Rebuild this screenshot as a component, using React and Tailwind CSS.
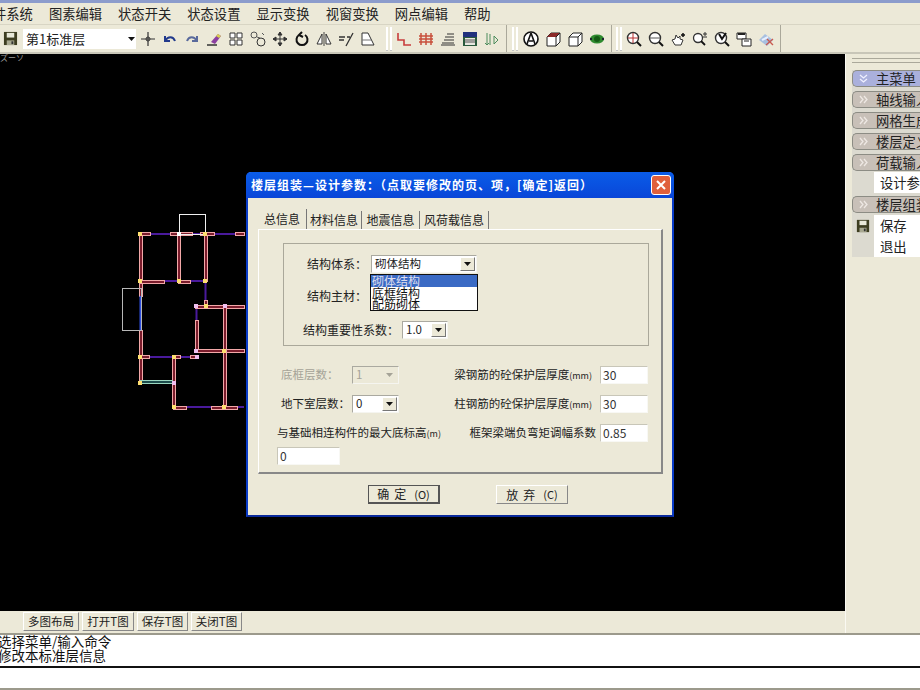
import React from 'react';

// toolbar icons, 16x16 drawings
const icons = {
  save: <><path d="M1 1h14v14H1z" fill="#3d3d20" /><path d="M4 2h8v5H4z" fill="#e8e8d8" /><path d="M4 10h8v5H4z" fill="#a8a890" /><path d="M9 11h2v3H9z" fill="#333" /></>,
  snap: <><path d="M8 1v14M1 8h14" stroke="#333" strokeWidth="1.2" fill="none" /><circle cx="8" cy="8" r="2" fill="none" stroke="#333" /></>,
  undo: <path d="M3 5v5h5M3 10c3-5 8-5 10 0" stroke="#223a8c" strokeWidth="2" fill="none" />,
  redo: <path d="M13 5v5H8M13 10C10 5 5 5 3 10" stroke="#5a6a9c" strokeWidth="2" fill="none" />,
  erase: <><path d="M5 11l7-8 3 2-6 8z" fill="#8a3fa0" /><path d="M10 5l2-2 3 2-2 2z" fill="#d8d050" /><path d="M1 14h10" stroke="#333" strokeWidth="1.5" /></>,
  grid: <path d="M2 2h5v5H2zM9 2h5v5H9zM2 9h5v5H2zM9 9h5v5H9z" fill="#fff" stroke="#333" />,
  copy: <><circle cx="4" cy="4" r="3" fill="none" stroke="#555" /><circle cx="11" cy="11" r="4" fill="none" stroke="#333" /><path d="M7 6l3 1M12 2l2 2" stroke="#555" /></>,
  move: <path d="M8 1v14M1 8h14M8 1L6 4h4zM8 15l-2-3h4zM1 8l3-2v4zM15 8l-3-2v4z" stroke="#333" fill="#333" />,
  rotate: <path d="M5 4a5.5 5.5 0 1 0 6 0M8 1l-3 3 4 2" stroke="#111" strokeWidth="2" fill="none" />,
  mirror: <><path d="M8 1v14" stroke="#444" /><path d="M6 3v10H1zM10 3v10h5z" fill="#fff" stroke="#333" /></>,
  trim: <path d="M1 6h6M1 9h5M15 2L8 15M9 6h3" stroke="#333" strokeWidth="1.3" fill="none" />,
  corner: <><path d="M2 2h6l6 12H2z" fill="#fff" stroke="#333" /><path d="M2 9h9" stroke="#777" /></>,
  step: <path d="M2 2v7h6v5h7" stroke="#c83c3c" strokeWidth="1.6" fill="none" />,
  wall: <path d="M3 2v12M8 2v12M13 2v12M1 5h14M1 8h14M1 11h14" stroke="#c8503c" strokeWidth="1.5" />,
  lines: <path d="M7 3h7M5 6h9M4 9h10M2 12h12M1 14h14" stroke="#333" />,
  building: <><path d="M1 1h14v14H1z" fill="#2a5a3c" /><path d="M1 1h14v5H1z" fill="#20307c" /><path d="M3 7h10v7H3z" fill="#e8e8e0" /><path d="M3 9h10M3 11h10" stroke="#555" /></>,
  arrows: <path d="M3 2v12M6 3v11M10 5l4 4-4 4zM1 12l2 2 2-2" stroke="#4c8c5c" fill="none" />,
  pen: <><circle cx="8" cy="8" r="7" fill="#fff" stroke="#111" strokeWidth="1.6" /><path d="M8 2L4 13M8 2l4 11M6 10h4" stroke="#111" strokeWidth="1.6" fill="none" /></>,
  box1: <><path d="M2 6l4-4h9v9l-4 4H2z" fill="#fff" stroke="#222" /><path d="M2 6l4-4h9l-4 4z" fill="#8c2a2a" /><path d="M11 6v9M11 6l4-4" stroke="#222" /></>,
  box2: <><path d="M2 6l4-4h9v9l-4 4H2z" fill="#fff" stroke="#222" /><path d="M2 6h9v9M11 6l4-4" stroke="#222" fill="none" /></>,
  globe: <><ellipse cx="8" cy="8" rx="7" ry="4.5" fill="#2f8a2f" /><circle cx="8" cy="8" r="3" fill="#145c14" /><path d="M1 8h2M13 8h2" stroke="#223" strokeWidth="2" /></>,
  zoom1: <><circle cx="7" cy="7" r="5.5" fill="#fff" stroke="#333" strokeWidth="1.4" /><path d="M7 2v10M2 7h10" stroke="#b83030" /><path d="M11 11l4 4" stroke="#111" strokeWidth="2" /></>,
  zoom2: <><circle cx="7" cy="7" r="5.5" fill="#fff" stroke="#333" strokeWidth="1.4" /><path d="M2 7h10" stroke="#555" /><path d="M11 11l4 4" stroke="#111" strokeWidth="2" /></>,
  hand: <><path d="M2 9l3 5h6l2-5-3-1V5L8 7 6 4 5 8z" fill="#fff" stroke="#333" /><path d="M11 4h4M13 2v4" stroke="#111" strokeWidth="1.5" /></>,
  zoom3: <><circle cx="6" cy="7" r="4.5" fill="#fff" stroke="#333" strokeWidth="1.3" /><path d="M9 10l4 4" stroke="#111" strokeWidth="1.8" /><path d="M11 3h4M13 1v4M11 6h4" stroke="#333" /></>,
  zoom4: <><circle cx="7" cy="7" r="5.5" fill="#fff" stroke="#333" strokeWidth="1.4" /><path d="M5 3l3 5 4-6" stroke="#111" strokeWidth="2" fill="none" /><path d="M11 11l4 4" stroke="#111" strokeWidth="2" /></>,
  pages: <><path d="M1 2h9v6H1z" fill="#fff" stroke="#222" /><path d="M6 8h9v7H6z" fill="#fff" stroke="#222" /><path d="M2 3h7" stroke="#222" strokeWidth="2" /><path d="M8 10h5" stroke="#222" /></>,
  clean: <><path d="M1 9l6-6 8 6-6 6z" fill="#a8c0e0" /><path d="M4 9l6-3" stroke="#e8f0ff" strokeWidth="2" /><path d="M8 14l7-6M9 8l6 6" stroke="#c85a50" strokeWidth="1.4" /></>,
};

const Ico = ({ name, w = 22 }) => (
  <div className="flex shrink-0 justify-center" style={{ width: w }}>
    <svg width="16" height="16" viewBox="0 0 16 16">{icons[name]}</svg>
  </div>
);

const Grip = ({ className }) => (
  <div className={`flex h-[24px] w-[6px] shrink-0 gap-[2px] ${className}`}>
    <div className="w-[2px] border-x border-x-[#fff] border-b border-b-[#888] bg-[#d8d5c4]" />
    <div className="w-[2px] border-x border-x-[#fff] border-b border-b-[#888] bg-[#d8d5c4]" />
  </div>
);

const Arrow = ({ color = '#111' }) => (
  <svg width="7" height="4" viewBox="0 0 7 4"><path d="M0 0h7L3.5 4z" fill={color} /></svg>
);

// a win32 combo box
const Combo = ({ value, width, disabled }) => (
  <div
    className={`flex h-[18px] shrink-0 items-center justify-between border border-[#aaa9a0] border-r-[#f5f5f0] border-b-[#f5f5f0] pl-[3px] pr-[1px] text-[11.5px] ${disabled ? 'bg-[#ece9d8] text-[#a5a397]' : 'bg-white text-[#222]'}`}
    style={{ width }}
  >
    <span>{value}</span>
    <div className={`flex h-[14px] w-[15px] items-center justify-center ${disabled ? '' : 'border border-[#fff] border-r-[#777] border-b-[#777] bg-[#ece9d8]'}`}>
      <Arrow color={disabled ? '#a5a397' : '#111'} />
    </div>
  </div>
);

const Input = ({ value, width = 48 }) => (
  <div className="flex h-[18px] shrink-0 items-center border border-[#c8c6b8] border-r-[#f8f8f4] border-b-[#f8f8f4] bg-white pl-[2px] text-[12px] text-[#333]" style={{ width }}>
    {value}
  </div>
);

const Wall = ({ x, y, w, h }) => (
  <rect x={x + 0.5} y={y + 0.5} width={w} height={h} fill="#7a1c2c" stroke="#f2a8a8" strokeWidth="1" />
);

const FloorPlan = () => {
  const walls = [
    [139, 234, 3, 62], [139, 330, 3, 52], [177, 234, 3, 47], [204, 234, 3, 47],
    [140, 232, 10, 3], [170, 232, 22, 3], [200, 232, 14, 3], [235, 232, 9, 3],
    [140, 280, 24, 3], [178, 280, 12, 3], [204, 300, 3, 8],
    [195, 305, 49, 3], [195, 320, 3, 32], [196, 349, 48, 3], [223, 306, 3, 101],
    [140, 355, 9, 3], [173, 355, 7, 3], [190, 355, 8, 3], [172, 357, 3, 50],
    [173, 406, 13, 3], [211, 406, 26, 3],
  ];
  const purple = [
    'M150 234H170', 'M192 234H200', 'M214 234H235', 'M164 281H178', 'M190 281H205', 'M205.5 281V300',
    'M196.5 306V320', 'M149 357H173', 'M180 357H190', 'M186 407H211', 'M237 407H244',
  ];
  const nodes = [
    [138, 232, '#ffe070'], [177, 232, '#fff'], [203, 232, '#ffe070'], [138, 279, '#ffe070'], [177, 279, '#ffe070'],
    [203, 279, '#ffe070'], [204, 304, '#ffe070'], [194, 304, '#f0c0f0'], [223, 304, '#f0c0f0'], [194, 349, '#f0c0f0'],
    [222, 349, '#ffe070'], [138, 355, '#ffe070'], [172, 355, '#ffe070'], [195, 355, '#f0c0f0'], [138, 381, '#ffe070'],
    [172, 381, '#f0c0f0'], [172, 405, '#ffe070'], [222, 405, '#ffe070'],
  ];
  return (
    <svg className="absolute left-0 top-0" width="845" height="557" viewBox="0 54 845 557">
      {purple.map((d) => <path key={d} d={d} stroke="#4a1a9c" strokeWidth="2" fill="none" />)}
      {walls.map(([x, y, w, h]) => <Wall key={`${x}-${y}`} x={x} y={y} w={w} h={h} />)}
      <path d="M140.5 296V330" stroke="#3050e0" strokeWidth="2" />
      <rect x="122.5" y="288.5" width="19" height="42" fill="none" stroke="#b8b8b8" />
      <rect x="179.5" y="214.5" width="26" height="20" fill="none" stroke="#f0f0f0" />
      <rect x="140.5" y="380.5" width="32" height="3" fill="#1c4c4c" stroke="#9cd8c0" />
      {nodes.map(([x, y, c]) => <rect key={`${x}-${y}`} x={x} y={y} width="4" height="4" fill={c} />)}
    </svg>
  );
};

const Pill = ({ label, active }) => (
  <div className={`flex h-[17px] items-center whitespace-nowrap rounded-l-[5px] border border-r-0 border-[#8c8c84] text-[13.3px] text-[#222] ${active ? 'bg-[#aab0dc]' : 'bg-[#c8c0b8]'}`}>
    <div className="flex w-[23px] shrink-0 justify-center pr-[2px]">
      {active ? (
        <svg width="9" height="9" viewBox="0 0 9 9"><path d="M1 1l3.5 3L8 1M1 5l3.5 3L8 5" stroke="#f0f0ff" strokeWidth="1.3" fill="none" /></svg>
      ) : (
        <svg width="9" height="9" viewBox="0 0 9 9"><path d="M1 1l3 3.5L1 8M5 1l3 3.5L5 8" stroke="#eee8e4" strokeWidth="1.3" fill="none" /></svg>
      )}
    </div>
    {label}
  </div>
);

const MenuRow = ({ label, save }) => (
  <div className="flex h-[21px] whitespace-nowrap text-[13.3px] text-[#222]">
    <div className="flex w-[22px] shrink-0 items-center justify-center bg-[#dcdad0]">
      {save && <svg width="14" height="14" viewBox="0 0 16 16">{icons.save}</svg>}
    </div>
    <div className="flex flex-1 items-center bg-white pl-[6px]">{label}</div>
  </div>
);

const TabBtn = ({ label, width }) => (
  <div className="flex h-[19px] items-center justify-center whitespace-nowrap border border-[#fff] border-r-[#888] border-b-[#888] bg-[#ece9d8] text-[11.5px] text-[#222]" style={{ width }}>
    {label}
  </div>
);

const App = () => {
  return (
    <div className="relative flex h-[690px] w-[920px] flex-col overflow-hidden bg-[#ece9d8] text-[13px] text-[#222] [font-family:'Noto_Sans_CJK_SC','Liberation_Sans',sans-serif]">
      <div className="h-[3px] shrink-0 bg-[#8c9ccc]" />

      {/* menu bar */}
      <div className="-ml-[7px] flex h-[22px] shrink-0 items-center gap-[16px] whitespace-nowrap border-b border-b-[#d8d5c4] text-[13.3px]">
        <span>件系统</span>
        <span>图素编辑</span>
        <span>状态开关</span>
        <span>状态设置</span>
        <span>显示变换</span>
        <span>视窗变换</span>
        <span>网点编辑</span>
        <span>帮助</span>
      </div>

      {/* toolbar */}
      <div className="flex h-[29px] shrink-0 items-center border-b-2 border-b-[#c8c6b8]">
        <div className="flex h-[27px] w-[781px] items-center border-r border-r-[#aaa89a] pl-[3px]">
          <svg width="15" height="15" viewBox="0 0 16 16" className="shrink-0">{icons.save}</svg>
          <div className="ml-[5px] flex h-[20px] w-[113px] shrink-0 items-center justify-between bg-white pl-[3px] pr-[1px] text-[13px]">
            <span>第1标准层</span>
            <Arrow />
          </div>
          <div className="ml-[1px] flex">
            {['snap', 'undo', 'redo', 'erase', 'grid', 'copy', 'move', 'rotate', 'mirror', 'trim', 'corner'].map((n) => <Ico key={n} name={n} />)}
          </div>
          <Grip className="ml-[7px] mr-[1px]" />
          <div className="flex">
            {['step', 'wall', 'lines', 'building', 'arrows'].map((n) => <Ico key={n} name={n} />)}
          </div>
          <div className="ml-[3px] h-[27px] border-l border-l-[#aaa89a]" />
          <Grip className="ml-[5px] mr-[2px]" />
          <div className="flex">
            {['pen', 'box1', 'box2', 'globe'].map((n) => <Ico key={n} name={n} />)}
          </div>
          <div className="ml-[3px] h-[27px] border-l border-l-[#aaa89a]" />
          <Grip className="ml-[4px] mr-[1px]" />
          <div className="flex">
            {['zoom1', 'zoom2', 'hand', 'zoom3', 'zoom4', 'pages', 'clean'].map((n) => <Ico key={n} name={n} />)}
          </div>
        </div>
      </div>

      {/* main area */}
      <div className="flex h-[579px] shrink-0">
        <div className="flex w-[845px] shrink-0 flex-col">
          <div className="relative h-[557px] shrink-0 bg-black">
            <span className="absolute left-0 top-[-1px] text-[8px] leading-[10px] text-[#999]">ズーソ</span>
            <FloorPlan />
          </div>
          <div className="flex h-[22px] items-start gap-[3px] pl-[23px] pt-[1px]">
            <TabBtn label="多图布局" width={56} />
            <TabBtn label="打开T图" width={52} />
            <TabBtn label="保存T图" width={51} />
            <TabBtn label="关闭T图" width={51} />
          </div>
        </div>
        <div className="flex-1 border-l border-l-[#faf9f2] pl-[6px] pt-[4px]">
          <div className="mb-[7px] h-[5px] border-y border-y-[#aaa89a]" />
          <div className="bg-[#dcdad0]">
            <div className="flex flex-col gap-[4px]">
              <Pill label="主菜单" active />
              <Pill label="轴线输入" />
              <Pill label="网格生成" />
              <Pill label="楼层定义" />
              <Pill label="荷载输入" />
            </div>
            <div className="mt-[1px]"><MenuRow label="设计参数" /></div>
            <div className="mt-[3px]"><Pill label="楼层组装" /></div>
            <div className="mt-[2px]">
              <MenuRow label="保存" save />
              <MenuRow label="退出" />
            </div>
          </div>
        </div>
      </div>

      {/* command area */}
      <div className="h-[2px] shrink-0 bg-[#9c9a8c]" />
      <div className="-ml-[2px] h-[33px] shrink-0 whitespace-nowrap border-b-2 border-b-[#111] bg-white text-[13.5px] leading-[14px] text-[#111]">
        <div className="-mt-[1px]">选择菜单/输入命令</div>
        <div>修改本标准层信息</div>
      </div>
      <div className="h-[20px] shrink-0 bg-white" />
      <div className="h-[2px] shrink-0 bg-[#9c9a8c]" />

      {/* dialog */}
      <div className="absolute left-[246px] top-[172px] h-[345px] w-[428px] rounded-t-[5px] border-2 border-t-0 border-[#0a3cc8] border-b-[#0a2a9c] bg-[#ece9d8] text-[12px]">
        <div className="-mx-[2px] flex h-[26px] items-center justify-between rounded-t-[5px] bg-gradient-to-b from-[#0a5ce8] to-[#0a46d8] pl-[5px] pr-[3px] text-[12px] font-bold whitespace-nowrap text-white">
          <span className="tracking-[1px]">楼层组装—设计参数：（点取要修改的页、项，[确定]返回）</span>
          <div className="flex h-[20px] w-[20px] items-center justify-center rounded-[3px] border border-white bg-[#e0603c]">
            <svg width="10" height="10" viewBox="0 0 10 10"><path d="M1 1l8 8M9 1L1 9" stroke="#fff" strokeWidth="2" /></svg>
          </div>
        </div>

        <div className="ml-[10px] mt-[11px] w-[405px]">
          <div className="flex h-[20px] items-end">
            <div className="flex h-[20px] w-[49px] items-start justify-center border-r border-r-[#777] pt-[1px]">总信息</div>
            <div className="flex h-[18px] w-[55px] items-center justify-center border-r border-r-[#777]">材料信息</div>
            <div className="flex h-[18px] w-[58px] items-center justify-center border-r border-r-[#777]">地震信息</div>
            <div className="flex h-[18px] w-[69px] items-center justify-center border-r border-r-[#777]">风荷载信息</div>
          </div>
          <div className="h-[245px] border border-t-[#fff] border-l-[#fff] border-r-2 border-r-[#888] border-b-2 border-b-[#888] pt-[13px]">
            <div className="relative ml-[24px] h-[103px] w-[366px] border border-[#aaa89a] pt-[11px]">
              <div className="flex h-[18px] items-center pl-[23px]">
                <span className="w-[64px]">结构体系：</span>
                <Combo value="砌体结构" width={106} />
              </div>
              <div className="mt-[14px] flex h-[18px] items-center pl-[23px]">
                <span className="w-[64px]">结构主材：</span>
              </div>
              <div className="mt-[16px] flex h-[18px] items-center pl-[19px]">
                <span className="w-[99px]">结构重要性系数：</span>
                <Combo value="1.0" width={46} />
              </div>
              {/* open dropdown list */}
              <div className="absolute left-[86px] top-[30px] w-[108px] border border-[#111] bg-white text-[12px] leading-[11.5px] text-[#111]">
                <div className="h-[12px] bg-[#3a6ac4] pl-[1px] text-[#dde]">砌体结构</div>
                <div className="h-[11px] pl-[1px]">底框结构</div>
                <div className="h-[12px] pl-[1px]">配筋砌体</div>
              </div>
            </div>

            <div className="mt-[20px] flex h-[18px] items-center justify-between pl-[22px] pr-[13px] text-[11.5px]">
              <div className="flex items-center text-[#a5a397]">
                <span className="w-[71px]">底框层数：</span>
                <Combo value="1" width={47} disabled />
              </div>
              <div className="flex items-center gap-[8px]">
                <span>梁钢筋的砼保护层厚度<span className="text-[9px]">(mm)</span></span>
                <Input value="30" />
              </div>
            </div>
            <div className="mt-[11px] flex h-[18px] items-center justify-between pl-[22px] pr-[13px] text-[11.5px]">
              <div className="flex items-center">
                <span className="w-[71px]">地下室层数：</span>
                <Combo value="0" width={47} />
              </div>
              <div className="flex items-center gap-[8px]">
                <span>柱钢筋的砼保护层厚度<span className="text-[9px]">(mm)</span></span>
                <Input value="30" />
              </div>
            </div>
            <div className="mt-[11px] flex h-[18px] items-center justify-between pl-[18px] pr-[13px] text-[11.5px]">
              <span>与基础相连构件的最大底标高<span className="text-[9px]">(m)</span></span>
              <div className="flex items-center gap-[4px]">
                <span>框架梁端负弯矩调幅系数</span>
                <Input value="0.85" />
              </div>
            </div>
            <div className="ml-[18px] mt-[5px]">
              <Input value="0" width={63} />
            </div>
          </div>
        </div>

        <div className="mt-[11px] flex justify-center gap-[56px] pl-[16px] text-[12px]">
          <div className="flex h-[19px] w-[72px] items-center justify-center border border-[#555] border-r-2 border-b-2 bg-[#ece9d8]">
            <span className="tracking-[5px]">确定</span><span className="ml-[3px] text-[11px]">(O)</span>
          </div>
          <div className="flex h-[19px] w-[72px] items-center justify-center border border-[#fff] border-r-[#888] border-b-[#888] bg-[#ece9d8]">
            <span className="tracking-[5px]">放弃</span><span className="ml-[3px] text-[11px]">(C)</span>
          </div>
        </div>
      </div>
    </div>
  );
};

export default App;
